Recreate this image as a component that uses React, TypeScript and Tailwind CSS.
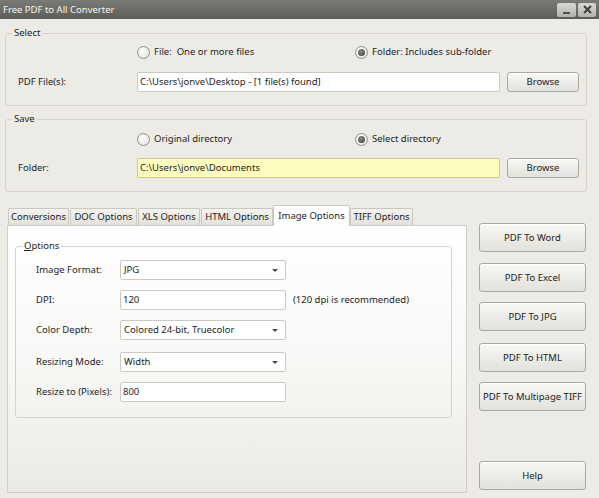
import React from "react";

const font = { fontFamily: '"Noto Sans", "Open Sans", sans-serif' };

function Radio({ checked }: { checked?: boolean }) {
  return (
    <span className="relative flex h-[13px] w-[13px] shrink-0 items-center justify-center rounded-full border border-[#8e8d88] bg-[radial-gradient(circle_at_40%_35%,#ffffff,#e2e1dc)]">
      {checked && (
        <span className="h-[7px] w-[7px] rounded-full bg-[radial-gradient(circle_at_40%_35%,#8a8a88,#3c3c3a)]" />
      )}
    </span>
  );
}

function Btn({ children, className = "" }: { children: React.ReactNode; className?: string }) {
  return (
    <div
      className={`flex items-center justify-center rounded-[3px] border border-[#a9a8a1] bg-gradient-to-b from-[#f8f8f5] to-[#e2e1db] text-[#222] shadow-[inset_0_1px_0_#ffffff] ${className}`}
    >
      {children}
    </div>
  );
}

function Input({ value, className = "" }: { value: string; className?: string }) {
  return (
    <div className={`flex h-[20px] items-center rounded-[2px] border border-[#cbc9c2] bg-white pl-[2px] text-[#1e1e1e] ${className}`}>
      {value}
    </div>
  );
}

function Select({ value }: { value: string }) {
  return (
    <div className="relative flex h-[20px] w-[166px] items-center rounded-[2px] border border-[#cbc9c2] bg-white pl-[3px] text-[#1e1e1e]">
      {value}
      <span className="absolute right-[7px] top-[8px] h-0 w-0 border-x-[3px] border-t-[3px] border-x-transparent border-t-[#4a4a4a]" />
    </div>
  );
}

function Tab({ label, active, w, ml }: { label: string; active?: boolean; w: string; ml: string }) {
  if (active) {
    return (
      <div
        className={`relative z-10 -mb-[1px] flex h-[21px] items-center justify-center rounded-t-[2px] border border-b-0 border-[#c9c7c0] bg-white ${w} ${ml}`}
      >
        {label}
      </div>
    );
  }
  return (
    <div
      className={`flex h-[17px] items-center justify-center rounded-t-[2px] border border-b-0 border-[#c9c7c0] bg-gradient-to-b from-[#f4f3ef] to-[#e2e1db] ${w} ${ml}`}
    >
      {label}
    </div>
  );
}

export default function App() {
  return (
    <div
      className="flex h-[498px] w-[599px] flex-col overflow-hidden bg-[#ecebe6] text-[9.5px] leading-[14px] text-[#1e1e1e]"
      style={font}
    >
      {/* Title bar */}
      <div className="flex h-[19px] shrink-0 items-center justify-between bg-gradient-to-b from-[#7b7b76] to-[#5d5d58] pl-[3px] pr-[3px] text-[9.5px] text-[#f4f4f2]">
        <span>Free PDF to All Converter</span>
        <div className="flex gap-[2px]">
          <div className="flex h-[14px] w-[19px] items-end justify-center rounded-[2px] bg-gradient-to-b from-[#d8d8d4] to-[#b3b3ae] pb-[3px]">
            <span className="h-[2px] w-[7px] bg-[#4d4d4b]" />
          </div>
          <div className="flex h-[14px] w-[18px] items-center justify-center rounded-[2px] bg-gradient-to-b from-[#d8d8d4] to-[#b3b3ae]">
            <svg width="9" height="9" viewBox="0 0 9 9">
              <path d="M1 1 L8 8 M8 1 L1 8" stroke="#3f3f3d" strokeWidth="2" />
            </svg>
          </div>
        </div>
      </div>

      <div className="flex flex-col pl-[5px] pr-[12px]">
        {/* Select group */}
        <div className="relative mt-[14px] h-[73px] rounded-[3px] border border-[#d4d2cb]">
          <span className="absolute -top-[8px] left-[6px] bg-[#ecebe6] px-[2px]">Select</span>
          <div className="mt-[10px] flex h-[16px] items-center pl-[131px]">
            <div className="flex w-[218px] items-center gap-[4px]">
              <Radio />
              <span>File:&nbsp; One or more files</span>
            </div>
            <div className="flex items-center gap-[4px]">
              <Radio checked />
              <span>Folder: Includes sub-folder</span>
            </div>
          </div>
          <div className="mt-[12px] flex h-[20px] items-center">
            <span className="w-[131px] pl-[12px]">PDF File(s):</span>
            <Input value="C:\Users\jonve\Desktop - [1 file(s) found]" className="w-[363px]" />
            <Btn className="ml-[7px] h-[20px] w-[72px]">Browse</Btn>
          </div>
        </div>

        {/* Save group */}
        <div className="relative mt-[13px] h-[73px] rounded-[3px] border border-[#d4d2cb]">
          <span className="absolute -top-[8px] left-[6px] bg-[#ecebe6] px-[2px]">Save</span>
          <div className="mt-[11px] flex h-[16px] items-center pl-[131px]">
            <div className="flex w-[218px] items-center gap-[4px]">
              <Radio />
              <span>Original directory</span>
            </div>
            <div className="flex items-center gap-[4px]">
              <Radio checked />
              <span>Select directory</span>
            </div>
          </div>
          <div className="mt-[11px] flex h-[20px] items-center">
            <span className="w-[131px] pl-[12px]">Folder:</span>
            <Input
              value="C:\Users\jonve\Documents"
              className="w-[363px] !border-[#cdcd84] !bg-[#fdfdbf]"
            />
            <Btn className="ml-[7px] h-[20px] w-[72px]">Browse</Btn>
          </div>
        </div>

        {/* Bottom area */}
        <div className="flex">
          <div className="ml-[2px] mt-[13px] flex w-[460px] flex-col">
            <div className="flex h-[20px] items-end">
              <Tab label="Conversions" w="w-[61px]" ml="ml-[1px]" />
              <Tab label="DOC Options" w="w-[67px]" ml="ml-[1px]" />
              <Tab label="XLS Options" w="w-[62px]" ml="ml-[1px]" />
              <Tab label="HTML Options" w="w-[72px]" ml="ml-[1px]" />
              <Tab label="Image Options" w="w-[77px]" ml="ml-0" active />
              <Tab label="TIFF Options" w="w-[63px]" ml="ml-0" />
            </div>
            <div className="h-[268px] border border-[#cfcdc6] bg-gradient-to-b from-[#ffffff] via-[#f8f8f6] to-[#ebeae5]">
              <div className="relative ml-[7px] mt-[20px] h-[172px] w-[437px] rounded-[3px] border border-[#d4d2cb]">
                <span className="absolute -top-[8px] left-[6px] bg-[#fdfdfc] px-[2px]">
                  <span className="underline">O</span>ptions
                </span>
                <div className="mt-[13px] flex h-[20px] items-center pl-[20px]">
                  <span className="w-[84px]">Image Format:</span>
                  <Select value="JPG" />
                </div>
                <div className="mt-[10px] flex h-[20px] items-center pl-[20px]">
                  <span className="w-[84px]">DPI:</span>
                  <Input value="120" className="w-[166px]" />
                  <span className="ml-[7px]">(120 dpi is recommended)</span>
                </div>
                <div className="mt-[10px] flex h-[20px] items-center pl-[20px]">
                  <span className="w-[84px]">Color Depth:</span>
                  <Select value="Colored 24-bit, Truecolor" />
                </div>
                <div className="mt-[12px] flex h-[20px] items-center pl-[20px]">
                  <span className="w-[84px]">Resizing Mode:</span>
                  <Select value="Width" />
                </div>
                <div className="mt-[10px] flex h-[20px] items-center pl-[20px]">
                  <span className="w-[84px]">Resize to (Pixels):</span>
                  <Input value="800" className="w-[166px]" />
                </div>
              </div>
            </div>
          </div>

          <div className="ml-[12px] mt-[31px] flex w-[107px] flex-col">
            <Btn className="h-[29px]">PDF To Word</Btn>
            <Btn className="mt-[11px] h-[29px]">PDF To Excel</Btn>
            <Btn className="mt-[10px] h-[29px]">PDF To JPG</Btn>
            <Btn className="mt-[12px] h-[29px]">PDF To HTML</Btn>
            <Btn className="mt-[10px] h-[29px]">PDF To Multipage TIFF</Btn>
            <Btn className="mt-[50px] h-[29px]">Help</Btn>
          </div>
        </div>
      </div>
    </div>
  );
}
